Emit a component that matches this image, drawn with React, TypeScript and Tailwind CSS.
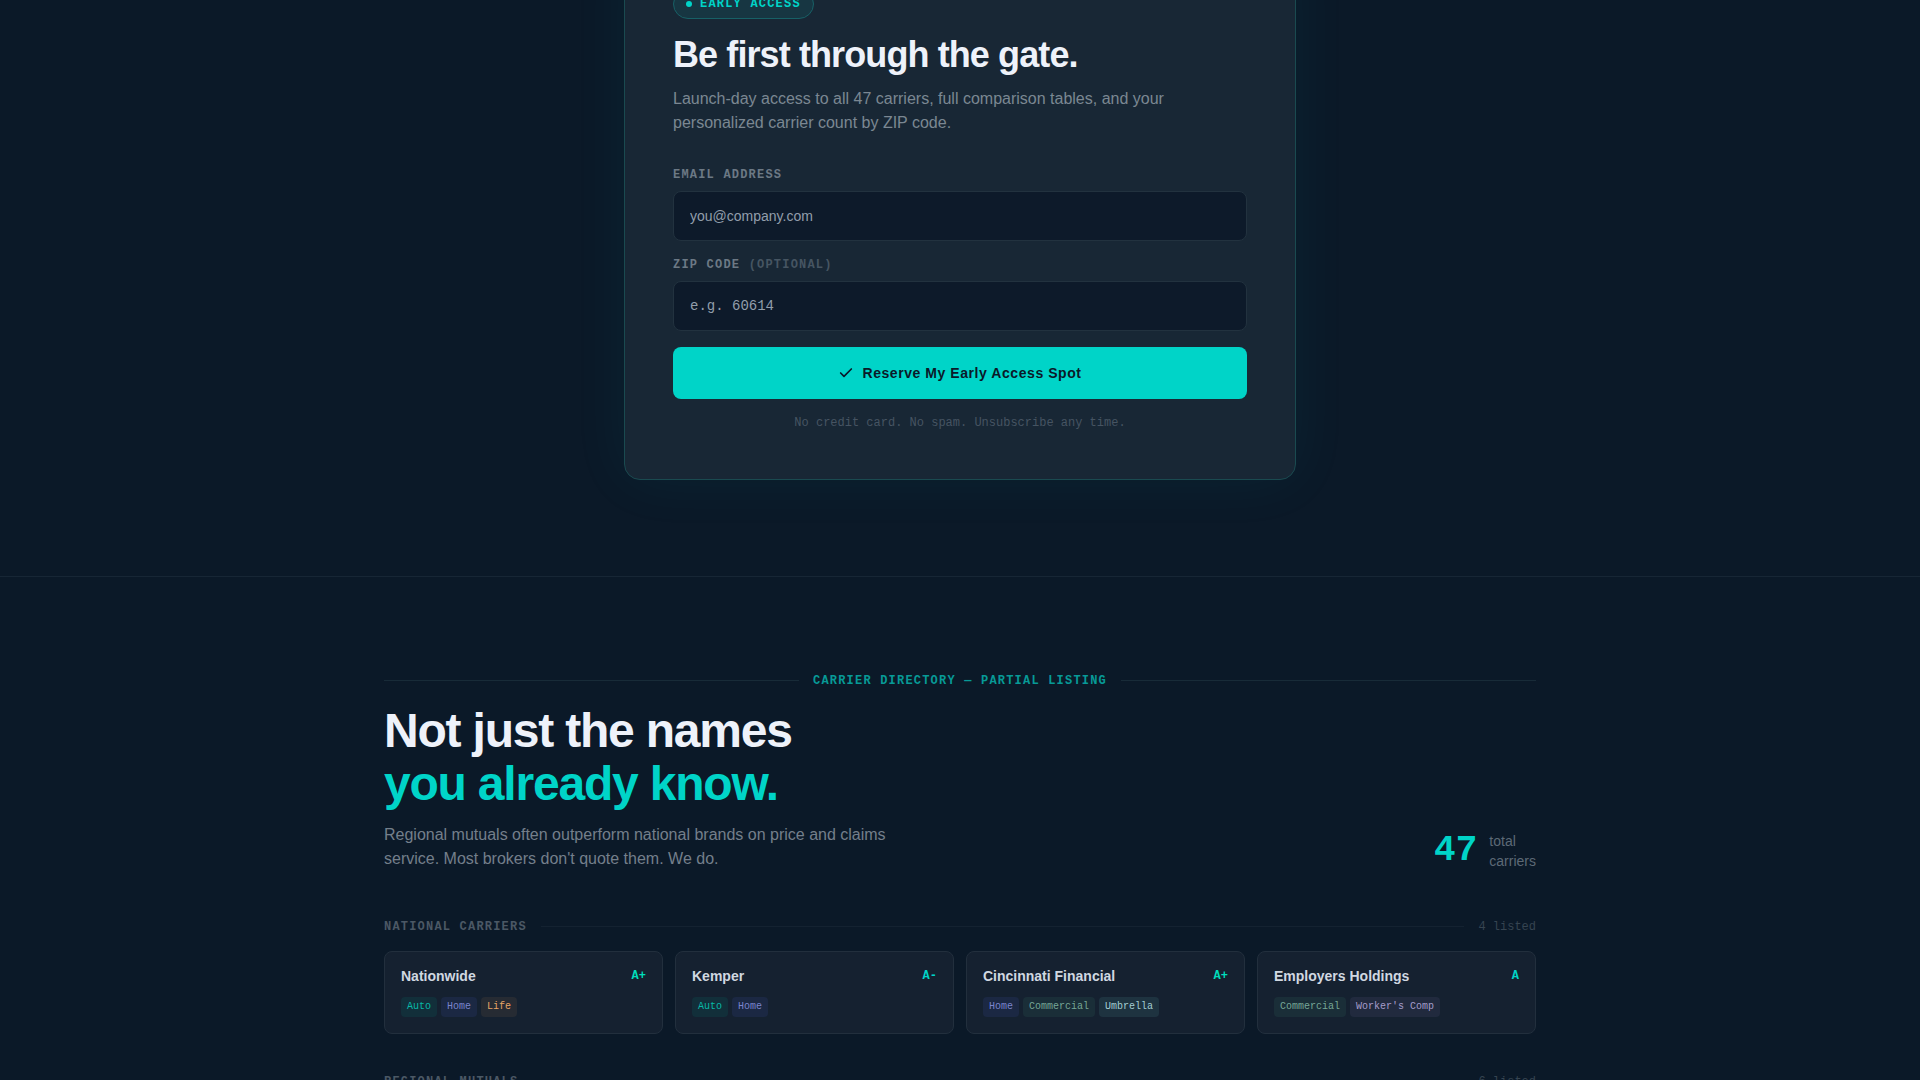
import { Check } from 'lucide-react';

type Coverage = 'Auto' | 'Home' | 'Life' | 'Commercial' | 'Umbrella' | "Worker's Comp";

interface Carrier {
  name: string;
  grade: string;
  coverage: Coverage[];
}

interface CarrierGroup {
  title: string;
  listed: number;
  carriers: Carrier[];
}

const tagStyles: Record<Coverage, string> = {
  Auto: 'bg-[#122f3a] text-[#08b8a8]',
  Home: 'bg-[#1b2843] text-[#7a84cd]',
  Life: 'bg-[#262b33] text-[#e5a566]',
  Commercial: 'bg-[#1a2e38] text-[#76a696]',
  Umbrella: 'bg-[#1e3340] text-[#a3cdd3]',
  "Worker's Comp": 'bg-[#212a3e] text-[#a59dcb]',
};

const gradeStyles: Record<string, string> = {
  'A+': 'text-[#00ddbb]',
  A: 'text-[#00d4c8]',
  'A-': 'text-[#00d4c8]',
};

const groups: CarrierGroup[] = [
  {
    title: 'National Carriers',
    listed: 4,
    carriers: [
      { name: 'Nationwide', grade: 'A+', coverage: ['Auto', 'Home', 'Life'] },
      { name: 'Kemper', grade: 'A-', coverage: ['Auto', 'Home'] },
      { name: 'Cincinnati Financial', grade: 'A+', coverage: ['Home', 'Commercial', 'Umbrella'] },
      { name: 'Employers Holdings', grade: 'A', coverage: ['Commercial', "Worker's Comp"] },
    ],
  },
  { title: 'Regional Mutuals', listed: 6, carriers: [] },
];

const mono = 'font-["Liberation_Mono",monospace]';
const eyebrow = `${mono} text-xs font-bold uppercase tracking-widest`;
const labelClass = `${eyebrow} mb-2 block text-[#6c7985]`;
const inputClass =
  'mb-4 block h-[50px] w-full rounded-lg border border-[#22323f] bg-[#0d1a2a] px-4 text-sm text-[#e8eef7] placeholder:text-[#929eab] outline-none';

const CarrierCard = ({ name, grade, coverage }: Carrier) => (
  <article className="rounded-lg border border-[#222f3d] bg-[#152130] p-4">
    <div className="mb-3 flex h-[17px] items-start justify-between">
      <h4 className="text-sm leading-[17px] font-bold text-[#d0d8e1]">{name}</h4>
      <span className={`${mono} text-xs font-bold ${gradeStyles[grade]}`}>{grade}</span>
    </div>
    <div className="flex flex-wrap gap-1">
      {coverage.map((item) => (
        <span
          key={item}
          className={`${mono} rounded-sm px-1.5 py-0.5 text-[10px] leading-4 ${tagStyles[item]}`}
        >
          {item}
        </span>
      ))}
    </div>
  </article>
);

const EarlyAccess = () => (
  <section className="border-b border-[#172635] px-6 pb-24">
    <div className="mx-auto -mt-[60px] max-w-2xl rounded-2xl border border-[#1a4a50] bg-[#182735] p-12 shadow-[0_0_60px_rgba(0,212,200,0.06)]">
      <div className="mb-4 inline-flex h-[30px] items-center gap-2 rounded-full border border-[#176066] bg-[#173642] px-3 align-top">
        <span className="size-1.5 rounded-full bg-[#00d4c8]" />
        <span className={`${eyebrow} text-[#00d4c8]`}>Early Access</span>
      </div>
      <h2 className="text-4xl font-bold tracking-tight text-[#eef2fa]">Be first through the gate.</h2>
      <p className="mt-3 mb-8 max-w-lg text-[#7b8792]">
        Launch-day access to all 47 carriers, full comparison tables, and your personalized carrier
        count by ZIP code.
      </p>
      <form onSubmit={(e) => e.preventDefault()}>
        <label htmlFor="email" className={labelClass}>
          Email address
        </label>
        <input id="email" type="email" placeholder="you@company.com" className={inputClass} />
        <label htmlFor="zip" className={labelClass}>
          Zip code <span className="text-[#465562]">(optional)</span>
        </label>
        <input id="zip" type="text" placeholder="e.g. 60614" className={`${mono} ${inputClass}`} />
        <button
          type="submit"
          className="flex h-[52px] w-full items-center justify-center gap-2 rounded-lg bg-[#00d4c8] text-sm font-bold tracking-[0.04em] text-[#0b1929]"
        >
          <Check size={16} strokeWidth={2.5} />
          Reserve My Early Access Spot
        </button>
      </form>
      <p className={`${mono} mt-4 text-center text-xs text-[#465462]`}>
        No credit card. No spam. Unsubscribe any time.
      </p>
    </div>
  </section>
);

const Directory = () => (
  <section className="px-6 pt-24">
    <div className="mx-auto max-w-6xl">
      <div className="mb-[15px] flex items-center gap-[14px]">
        <span className="mb-px h-px flex-1 bg-[#182b38]" />
        <span className={`${eyebrow} text-[#079a97]`}>Carrier Directory — Partial Listing</span>
        <span className="mb-px h-px flex-1 bg-[#182b38]" />
      </div>
      <div className="mb-12 flex items-end justify-between">
        <div>
          <h2 className="text-5xl leading-[53px] font-bold tracking-tight text-[#eef2fa]">
            Not just the names
            <br />
            <span className="text-[#00d4c8]">you already know.</span>
          </h2>
          <p className="mt-[13px] max-w-lg text-[#747f8b]">
            Regional mutuals often outperform national brands on price and claims service. Most
            brokers don't quote them. We do.
          </p>
        </div>
        <div className="flex items-center gap-3">
          <span className={`${mono} text-4xl font-bold text-[#00d4c8]`}>47</span>
          <span className="text-sm text-[#5d6976]">
            total
            <br />
            carriers
          </span>
        </div>
      </div>
      {groups.map(({ title, listed, carriers }) => (
        <div key={title} className="mb-10">
          <div className="mb-4 flex items-center gap-[14px]">
            <h3 className={`${eyebrow} text-[#4b5865]`}>{title}</h3>
            <span className="mb-px h-px flex-1 bg-[#142231]" />
            <span className={`${mono} text-xs text-[#364451]`}>{listed} listed</span>
          </div>
          <div className="grid gap-3 sm:grid-cols-2 lg:grid-cols-4">
            {carriers.map((carrier) => (
              <CarrierCard key={carrier.name} {...carrier} />
            ))}
          </div>
        </div>
      ))}
    </div>
  </section>
);

export default function App() {
  return (
    <main className='flow-root h-screen overflow-hidden bg-[#0b1928] font-["Liberation_Sans",Arial,sans-serif]'>
      <EarlyAccess />
      <Directory />
    </main>
  );
}
